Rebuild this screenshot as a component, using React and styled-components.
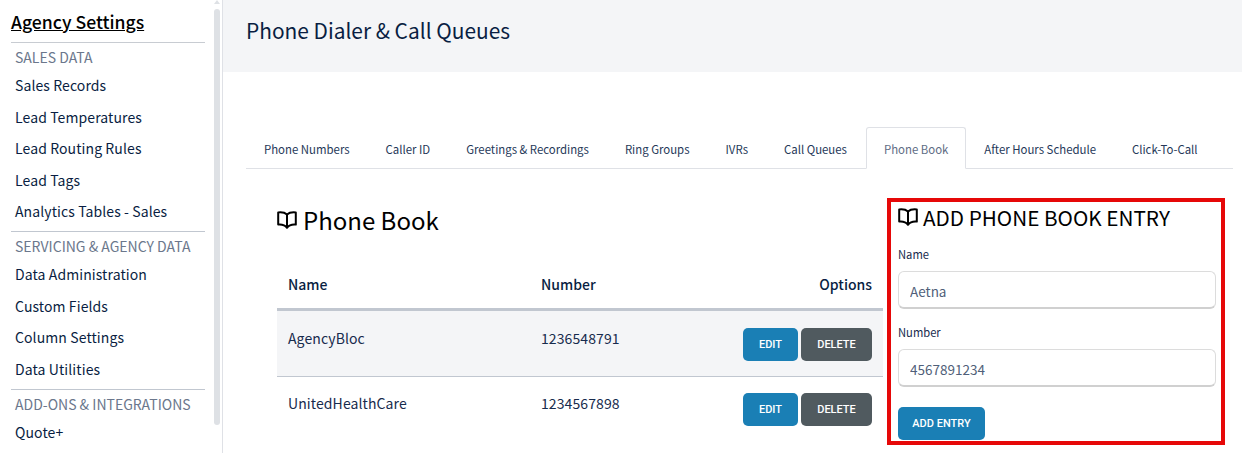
import React from "react";
import styled, { createGlobalStyle } from "styled-components";

const Global = createGlobalStyle`
  html, body { margin: 0; padding: 0; height: 100%; overflow: hidden; background: #fff; }
  body { font-family: "Noto Sans CJK JP", "Source Sans Pro", "Noto Sans", sans-serif; color: #091e42; }
  #root { height: 100%; }
  * { box-sizing: border-box; }
`;

const Page = styled.div`
  display: flex;
  width: 1242px;
  height: 453px;
  overflow: hidden;
`;

const Sidebar = styled.aside`
  position: relative;
  flex: 0 0 223px;
  height: 453px;
  border-right: 1px solid #dfe1e6;
  padding: 9px 17px 0 11px;
  overflow: hidden;
`;

const SideTitle = styled.h1`
  margin: 0;
  height: 34px;
  font-size: 17.6px;
  line-height: 25px;
  font-weight: 500;
  color: #000;
  text-decoration: underline;
  border-bottom: 1px solid #c8ccd2;
`;

const Group = styled.div`
  & + & { border-top: 1px solid #c1c7d0; margin-top: 3.5px; }
`;

const GroupLabel = styled.div`
  height: 27px;
  padding-left: 4px;
  font-size: 14px;
  line-height: 28px;
  color: #6b778c;
  white-space: nowrap;
`;

const SideLink = styled.div`
  height: 31.5px;
  padding-left: 4px;
  font-size: 14px;
  letter-spacing: 0.1px;
  line-height: 31px;
  color: #091e42;
  white-space: nowrap;
`;

const ScrollTrack = styled.div`
  position: absolute;
  top: 9px;
  right: 2px;
  width: 6px;
  height: 416px;
  border-radius: 3px;
  background: #dee1e5;
`;

const ScrollArrow = styled.div`
  position: absolute;
  top: 0;
  right: 2px;
  width: 0;
  height: 0;
  border-left: 3px solid transparent;
  border-right: 3px solid transparent;
  border-bottom: 4px solid #dee1e5;
`;

const Main = styled.main`
  flex: 1;
  min-width: 0;
`;

const Header = styled.header`
  height: 72px;
  padding-left: 23px;
  background: #f4f5f7;
  font-size: 20.9px;
  line-height: 61px;
  color: #091e42;
`;

const Tabs = styled.nav`
  display: flex;
  margin: 55px 9px 0 23px;
  height: 42px;
  border-bottom: 1px solid #dfe1e6;
`;

const Tab = styled.div`
  height: 42px;
  padding: 0 ${(p) => (p.$active ? 17 : 18)}px;
  font-size: 11.4px;
  line-height: 42px;
  white-space: nowrap;
  border: 1px solid ${(p) => (p.$active ? "#dfe1e6" : "transparent")};
  border-bottom: 1px solid ${(p) => (p.$active ? "#fff" : "transparent")};
  border-radius: 3px 3px 0 0;
  margin: ${(p) => (p.$active ? "0 0 0 1px" : "0 -1px")};
  color: ${(p) => (p.$active ? "#5e6c84" : "#253858")};
`;

const Content = styled.div`
  display: flex;
  align-items: flex-start;
  padding: 30px 17px 0 54px;
`;

const BookSection = styled.section`
  flex: 0 0 606px;
`;

const BookTitle = styled.h2`
  display: flex;
  align-items: center;
  gap: 6px;
  margin: 0;
  height: 66px;
  font-size: 24px;
  line-height: 46px;
  font-weight: 400;
  padding-bottom: 24px;
  color: #000;
`;

const BookGlyph = styled.svg`
  display: block;
  flex: none;
  width: 20px;
  height: 18px;
  fill: none;
  stroke: #000;
  stroke-width: 2;
  stroke-linejoin: round;
`;

const Table = styled.table`
  width: 100%;
  border-collapse: collapse;
`;

const Th = styled.th`
  height: 44px;
  padding: 0 11px 5px;
  font-size: 14px;
  font-weight: 500;
  color: #091e42;
  text-align: ${(p) => p.$align || "left"};
  border-bottom: 3px solid #c1c7d0;
`;

const NameHead = styled(Th)`
  width: 253px;
`;

const Tr = styled.tr`
  height: ${(p) => p.$h}px;
  background: ${(p) => (p.$shade ? "#f4f5f7" : "#fff")};
  border-bottom: ${(p) => (p.$shade ? "1px solid #c1c7d0" : "none")};
`;

const Td = styled.td`
  padding: 0 11px 11px;
  font-size: 14px;
  letter-spacing: 0.1px;
  color: #172b4d;
  vertical-align: middle;
`;

const ActionCell = styled.td`
  padding: 2px 11px 0;
  vertical-align: middle;
  text-align: right;
`;

const Actions = styled.div`
  display: flex;
  justify-content: flex-end;
  gap: 3px;
`;

const Button = styled.button`
  height: 33px;
  width: ${(p) => p.$w}px;
  padding: 0;
  border: none;
  border-radius: 5px;
  font-family: "Roboto", sans-serif;
  font-size: 11px;
  font-weight: 500;
  color: #fff;
  background: ${(p) => (p.$dark ? "#505a5f" : "#1a7fb5")};
`;

const FormBox = styled.section`
  flex: 0 0 338px;
  height: 247px;
  margin: -1px 0 0 4px;
  padding: 3px 5px 0 7px;
  border: 4px solid #e60808;
`;

const FormTitle = styled.h3`
  display: flex;
  align-items: center;
  gap: 5px;
  margin: 0 0 16px;
  height: 24px;
  font-size: 20.7px;
  line-height: 24px;
  font-weight: 400;
  color: #000;
  text-transform: uppercase;
  white-space: nowrap;
`;

const Label = styled.label`
  display: block;
  height: 18px;
  font-size: 11.2px;
  line-height: 18px;
  color: #172b4d;
`;

const Field = styled.div`
  margin-bottom: 14px;
`;

const Input = styled.input`
  display: block;
  width: 318px;
  height: 38px;
  margin-top: 8px;
  padding: 2px 11px 0;
  border: 1px solid #dcdcdc;
  border-bottom: 2px solid #d0d0d0;
  border-radius: 6px;
  background: #fff;
  font-family: inherit;
  font-size: 13.5px;
  color: #505f79;
  outline: none;
`;

const AddButton = styled(Button)`
  margin-top: 6px;
`;

const BookIcon = () => (
  <BookGlyph viewBox="0 0 20 18" aria-hidden="true">
    <path d="M10 3.5C8.2 1.8 5 1 1.2 1.4V13.6C5 13.2 8.2 14.4 10 16.8C11.8 14.4 15 13.2 18.8 13.6V1.4C15 1 11.8 1.8 10 3.5Z" />
    <path d="M10 3.5V16.8" />
  </BookGlyph>
);

const rows = [
  { name: "AgencyBloc", number: "1236548791", shade: true, h: 67 },
  { name: "UnitedHealthCare", number: "1234567898", shade: false, h: 65 },
];

const tabs = ["Phone Numbers", "Caller ID", "Greetings & Recordings", "Ring Groups", "IVRs", "Call Queues", "Phone Book", "After Hours Schedule", "Click-To-Call"];

const groups = [
  ["SALES DATA", ["Sales Records", "Lead Temperatures", "Lead Routing Rules", "Lead Tags", "Analytics Tables - Sales"]],
  ["SERVICING & AGENCY DATA", ["Data Administration", "Custom Fields", "Column Settings", "Data Utilities"]],
  ["ADD-ONS & INTEGRATIONS", ["Quote+"]],
];

export default function App() {
  return (
    <Page>
      <Global />
      <Sidebar>
        <SideTitle>Agency Settings</SideTitle>
        {groups.map(([label, links]) => (
          <Group key={label}>
            <GroupLabel>{label}</GroupLabel>
            {links.map((l) => <SideLink key={l}>{l}</SideLink>)}
          </Group>
        ))}
        <ScrollArrow />
        <ScrollTrack />
      </Sidebar>
      <Main>
        <Header>Phone Dialer &amp; Call Queues</Header>
        <Tabs>
          {tabs.map((t) => <Tab key={t} $active={t === "Phone Book"}>{t}</Tab>)}
        </Tabs>
        <Content>
          <BookSection>
            <BookTitle><BookIcon />Phone Book</BookTitle>
            <Table>
              <thead>
                <tr>
                  <NameHead>Name</NameHead>
                  <Th>Number</Th>
                  <Th $align="right">Options</Th>
                </tr>
              </thead>
              <tbody>
                {rows.map((r) => (
                  <Tr key={r.name} $shade={r.shade} $h={r.h}>
                    <Td>{r.name}</Td>
                    <Td>{r.number}</Td>
                    <ActionCell>
                      <Actions>
                        <Button $w={55}>EDIT</Button>
                        <Button $w={71} $dark>DELETE</Button>
                      </Actions>
                    </ActionCell>
                  </Tr>
                ))}
              </tbody>
            </Table>
          </BookSection>
          <FormBox>
            <FormTitle><BookIcon />Add Phone Book Entry</FormTitle>
            <Field>
              <Label>Name</Label>
              <Input defaultValue="Aetna" />
            </Field>
            <Field>
              <Label>Number</Label>
              <Input defaultValue="4567891234" />
            </Field>
            <AddButton $w={87}>ADD ENTRY</AddButton>
          </FormBox>
        </Content>
      </Main>
    </Page>
  );
}
